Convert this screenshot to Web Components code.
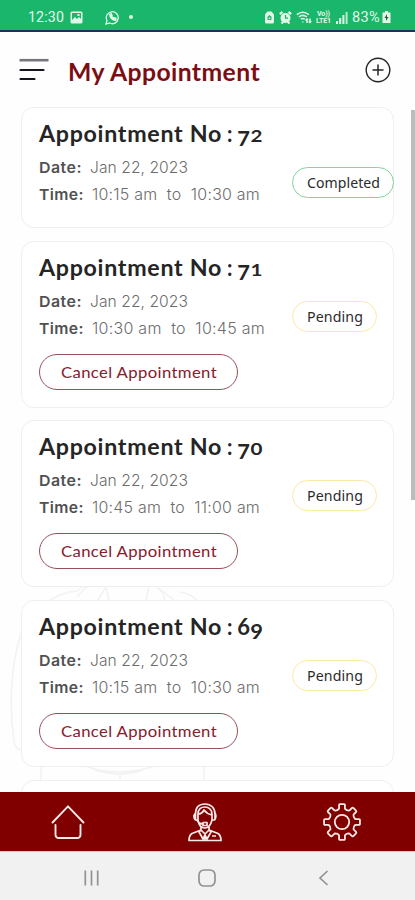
<!DOCTYPE html>
<html lang="en">
<head>
<meta charset="utf-8">
<title>My Appointment</title>
<style>
html, body {
  margin: 0;
  height: 100%;
  overflow: hidden;
}
body {
  --maroon: #800000;
  --green: #19b66b;
  --font-title: Lato, "Open Sans", sans-serif;
  --font-body: Inter, "Noto Sans", sans-serif;
  font-family: var(--font-body);
  background: #fefefe;
}
</style>
</head>
<body>
<appointment-app></appointment-app>

<template id="fit-text">
<style>
:host { display: inline-block; }
span {
  display: inline-block;
  white-space: pre;
  transform-origin: 0 50%;
}
</style>
<span><slot></slot></span>
</template>

<template id="status-bar">
<style>
:host {
  display: flex;
  align-items: center;
  height: 30px;
  padding: 4px 24px 0 28px;
  box-sizing: border-box;
  background: var(--green);
  box-shadow: 0 2px #17345f;
  color: #e2f8e7;
  font: 14px/26px Roboto, sans-serif;
}
svg { display: block; flex: none; }
.left, .right { display: flex; align-items: center; }
.right { margin-left: auto; gap: 4px; }
.photo { margin-left: 6px; }
.chat { margin-left: 22px; }
.battery { margin-left: -2px; }
.dot {
  width: 4px;
  height: 4px;
  border-radius: 50%;
  background: currentColor;
  margin-left: 9px;
}
</style>
<div class="left">
  <fit-text width="36">12:30</fit-text>
  <svg class="photo" width="13" height="13" viewBox="0 0 13 13"><path fill="currentColor" fill-rule="evenodd" d="M2 .5h9Q12.5.5 12.5 2v9q0 1.500-1.500 1.500H2Q.5 12.500.5 11V2Q.5.5 2 .5zM2 2v7l3-3 2 2 2-2 2 2V2zM7.500 3h2v2h-2z"/></svg>
  <svg class="chat" width="15" height="15" viewBox="0 0 15 15" fill="none" stroke="currentColor" stroke-width="1.300"><path d="M1 14l1-3.500a6 6 0 1 1 2.500 2.500z"/><path stroke-width="1.800" d="M5 4.500c0 3 2.500 5.500 5.500 5.500l.3-1.500-1.800-.8-.8.8L6.300 6.600l.6-.8L6.200 4z"/></svg>
  <span class="dot"></span>
</div>
<div class="right">
  <svg width="11" height="13" viewBox="0 0 11 13"><path fill="currentColor" fill-rule="evenodd" d="M3.500.5h4L10 3.500V11q0 1.500-1.500 1.500h-6Q1 12.500 1 11V3.500zM5.500 4L2.800 6.500h.8V9h3.800V6.500h.8zM4.700 6.500h1.600V8H4.700z"/></svg>
  <svg width="13" height="13" viewBox="0 0 13 13"><circle cx="6.500" cy="7" r="5" fill="currentColor"/><path stroke="currentColor" stroke-width="2.200" d="M.8 3.200L3.500.9M12.200 3.200L9.500.9M2.500 12.500l2-2M10.500 12.500l-2-2"/><path d="M6.500 4v3.200H9" fill="none" stroke="#19b66b" stroke-width="1.200"/></svg>
  <svg width="16" height="13" viewBox="0 0 16 13" fill="none" stroke="currentColor" stroke-width="1.500"><path d="M.8 3.700q6-5 12 0M2.800 6q4-3.300 8 0M4.800 8.200q2-1.500 4 0M6.800 10.500v1M11 12V8m-1.500 1.500L11 8l1 1M14 7.500v4m-1.300-1.300L14 11.500l1.300-1.300"/></svg>
  <svg width="16" height="14" viewBox="0 0 16 14" fill="currentColor" font-family="Roboto, sans-serif" font-size="7" font-weight="700"><text x="1" y="6" textLength="13">Vo))</text><text x="0" y="13" textLength="15">LTE1</text></svg>
  <svg width="12" height="13" viewBox="0 0 12 13" fill="currentColor"><path d="M0 10h2v3H0zM3.200 7h2v6h-2zM6.400 4h2v9h-2z"/><path opacity=".8" d="M9.600 1h2v12h-2z"/></svg>
  <fit-text width="28">83%</fit-text>
  <svg class="battery" width="9" height="12" viewBox="0 0 9 12"><path fill="currentColor" d="M3 0h3v1.500h2.500V12H.5V1.500H3z"/><path fill="#176a48" d="M5 3L2.500 7H4v3l2.600-4H5z"/></svg>
</div>
</template>

<template id="page-header">
<style>
:host {
  display: flex;
  align-items: center;
  height: 77px;
  padding: 3px 24px 0 19px;
  box-sizing: border-box;
}
h1 {
  margin: 3px 0 0 19px;
  color: #7b0d13;
  font: 700 24px/32px var(--font-title);
}
.add { margin-left: auto; }
svg { display: block; flex: none; }
</style>
<svg width="30" height="24" viewBox="0 0 30 24"><path stroke="#77767b" stroke-width="2.600" d="M.5 2.200h29"/><path stroke="#15151b" stroke-width="2.200" stroke-linecap="round" d="M1.500 12h23M1.500 21h14"/></svg>
<h1><fit-text width="192"><slot></slot></fit-text></h1>
<svg class="add" width="26" height="26" viewBox="0 0 26 26" fill="none" stroke="#242424" stroke-width="1.400"><circle cx="13" cy="13" r="11.800"/><path stroke-width="1.500" d="M13 7.500v11M7.500 13h11"/></svg>
</template>

<template id="old-number">
<style>
:host { display: inline-flex; align-items: baseline; }
span { display: inline-block; width: 13.200px; text-align: center; }
.small { font-size: .78em; transform: scaleX(1.200); }
.drop { font-size: .92em; transform: translateY(4px) scaleX(1.080); }
</style>
</template>

<template id="status-pill">
<style>
:host {
  display: block;
  box-sizing: border-box;
  height: 31px;
  padding: 0 13.500px;
  border: 1px solid #fbe9a6;
  border-radius: 16px;
  color: #2b2b2b;
  background: #fff;
  font: 14px/30px "Noto Sans", sans-serif;
}
:host([kind="completed"]) { border-color: #7ed6a0; }
</style>
<slot></slot>
</template>

<template id="cancel-button">
<style>
:host { display: block; }
button {
  display: block;
  width: 199px;
  height: 36px;
  padding: 0 0 1px 21px;
  border: 1px solid #965059;
  border-radius: 18px;
  background: #fff;
  color: #86202c;
  font: 400 16px/33px var(--font-title);
  text-align: left;
}
</style>
<button><fit-text width="156">Cancel Appointment</fit-text></button>
</template>

<template id="appointment-card">
<style>
:host {
  display: block;
  box-sizing: border-box;
  width: 373px;
  height: 167px;
  flex: none;
  padding: 10px 0 0 17px;
  border: 1px solid #efefef;
  border-radius: 13px;
  background: #fff;
}
:host([state="completed"]) { height: 121px; }
h2 {
  display: flex;
  align-items: baseline;
  height: 32px;
  margin: 0;
  color: #252525;
  font: 700 22px/32px var(--font-title);
}
.details { display: flex; height: 55px; margin-top: 4px; }
dl { margin: 0; width: 253px; flex: none; }
.row { display: flex; height: 27px; align-items: center; }
dt { color: #515151; font: 600 15px/27px var(--font-body); }
dd { margin: 0 0 0 8px; color: #6d6d6d; font: 300 15.500px/27px var(--font-body); }
status-pill { align-self: flex-start; margin-top: 13px; flex: none; }
cancel-button { margin-top: 11px; }
</style>
<h2></h2>
<div class="details">
  <dl>
    <div class="row"><dt><fit-text width="43">Date:</fit-text></dt><dd class="date"></dd></div>
    <div class="row"><dt><fit-text width="45">Time:</fit-text></dt><dd class="time"></dd></div>
  </dl>
  <status-pill></status-pill>
</div>
</template>

<template id="bottom-nav">
<style>
:host {
  display: grid;
  grid-template-columns: repeat(3, 1fr);
  align-items: center;
  justify-items: center;
  height: 60px;
  padding: 0 5px 0 0;
  background: var(--maroon);
  border-bottom: 1px solid #d5c9c9;
  box-sizing: border-box;
}
svg { display: block; fill: none; stroke: #f9eaea; }
</style>
<svg width="34" height="36" viewBox="0 0 34 36" stroke-width="1.900" stroke-linecap="round" stroke-linejoin="round"><path d="M1.500 18.500L17 2.300l15.500 16.200M4.500 21v9.500q0 3.500 3.500 3.500h18q3.500 0 3.500-3.500V21"/></svg>
<svg width="36" height="40" viewBox="0 0 36 40" stroke-width="1.700" stroke-linejoin="round"><path d="M8.500 18V12C8.500 5 12 2 18 2s10 4 10 10v6M11 18v-6c0-5 3-7 7-7s7 3 7 7v6M11 12q4 0 6-4 3 4 8 5M8.500 11q-3 3.500 0 7H11M28 11q2 3.500-.5 7H25M11 18q1 8 7 8 5 0 7-8M10 18q2 4 6 4M16 20.500h4v3h-4zM14 25v3l-9 3.500q-3 2-3 7h32q0-5-3-7L22 28v-3M14 28l4 4 4-4M14 28l-2 2 4 7 2-4 2 4 4-7-2-2M18 33v5M25 34h4"/></svg>
<svg width="38" height="38" viewBox="-19 -19 38 38" stroke-width="1.800" stroke-linejoin="round"><circle r="7.200"/><path class="gear"/></svg>
</template>

<template id="system-nav">
<style>
:host {
  display: flex;
  height: 48px;
  align-items: center;
  padding: 4px 0 0 83px;
  background: #f1f1f1;
  box-sizing: border-box;
}
svg { display: block; fill: none; stroke: #929292; stroke-width: 1.700; }
svg + svg { margin-left: 98px; }
svg:last-child { margin-left: 102px; }
</style>
<svg width="17" height="18" viewBox="0 0 17 18"><path d="M2.300 1.500v15M8.500 1.500v15M14.700 1.500v15"/></svg>
<svg width="18" height="18" viewBox="0 0 18 18"><rect x="1" y="1" width="16" height="16" rx="5"/></svg>
<svg width="11" height="18" viewBox="0 0 11 18"><path d="M9.500 2L2 9l7.500 7"/></svg>
</template>

<template id="appointment-app">
<style>
:host {
  display: flex;
  flex-direction: column;
  width: 415px;
  height: 900px;
  overflow: hidden;
}
status-bar, page-header, bottom-nav, system-nav { flex: none; }
main {
  display: flex;
  height: 685px;
  overflow: hidden;
  position: relative;
}
.list {
  display: flex;
  flex-direction: column;
  gap: 12.700px;
  width: 411px;
  padding-left: 21px;
  box-sizing: border-box;
  position: relative;
}
.edge {
  width: 371px;
  height: 40px;
  flex: none;
  border: 1px solid #efefef;
  border-radius: 13px;
  background: #fff;
}
.thumb { width: 4px; height: 390px; margin-top: 3px; background: #bcbcbc; }
.backdrop { position: absolute; left: 0; top: 463px; fill: none; stroke: #f2f2f2; stroke-width: 1.500; }
</style>
<status-bar></status-bar>
<page-header>My Appointment</page-header>
<main>
  <svg class="backdrop" width="240" height="222" viewBox="0 570 240 222"><path d="M47 602q15-10 30-11l10-7M77 597l8-9 7-3M98 600l8-13 3 14M146 600l3-14M165 601q-1-9-8-14l17 13M180 592q13 2 18 10M25 622Q5 675 14 742q2 8 8 8M22 670v72M41 765v15M204 765v15M85 766q32 12 70 0M95 770q25 8 48 0M120 775v5"/></svg>
  <div class="list"></div>
  <div class="thumb"></div>
</main>
<bottom-nav></bottom-nav>
<system-nav></system-nav>
</template>

<script>
class BaseElement extends HTMLElement {
  constructor() {
    super();
    const template = document.getElementById(this.localName);
    this.attachShadow({ mode: 'open' });
    this.shadowRoot.appendChild(template.content.cloneNode(true));
  }
}

// Spreads its text over the given width, half by stretching and half by tracking
class FitText extends BaseElement {
  connectedCallback() {
    const width = Number(this.getAttribute('width'));
    const span = this.shadowRoot.querySelector('span');
    const slotted = span.querySelector('slot').assignedNodes({ flatten: true });
    const count = slotted.map(node => node.textContent).join('').length;
    const natural = span.getBoundingClientRect().width;
    if (natural && count) {
      const scale = Math.sqrt(width / natural);
      span.style.letterSpacing = (width / scale - natural) / count + 'px';
      span.style.transform = 'scaleX(' + scale + ')';
    }
    this.style.width = width + 'px';
  }
}

// Old-style figures: 0-2 at x-height, 3-5, 7 and 9 below the baseline
class OldNumber extends BaseElement {
  connectedCallback() {
    for (const digit of this.getAttribute('value')) {
      const span = document.createElement('span');
      span.textContent = digit;
      if ('012'.includes(digit)) span.className = 'small';
      if ('34579'.includes(digit)) span.className = 'drop';
      this.shadowRoot.appendChild(span);
    }
  }
}

class AppointmentCard extends BaseElement {
  connectedCallback() {
    const root = this.shadowRoot;
    const state = this.getAttribute('state');
    root.querySelector('h2').innerHTML = '<fit-text width="183">Appointment No</fit-text><fit-text width="15"> : </fit-text><old-number value="' + this.getAttribute('number') + '"></old-number>';
    root.querySelector('.date').innerHTML = '<fit-text width="98">' + this.getAttribute('date') + '</fit-text>';
    root.querySelector('.time').innerHTML = '<fit-text width="' + this.getAttribute('time-width') + '">' + this.getAttribute('from') + '  to  ' + this.getAttribute('to') + '</fit-text>';
    const pill = root.querySelector('status-pill');
    pill.setAttribute('kind', state);
    pill.innerHTML = state === 'completed' ? '<fit-text width="73">Completed</fit-text>' : '<fit-text width="56">Pending</fit-text>';
    if (state === 'pending') {
      root.appendChild(document.createElement('cancel-button'));
    }
  }
}

class BottomNav extends BaseElement {
  connectedCallback() {
    // Eight rounded teeth around the hub
    const at = (r, deg) => {
      const a = deg * Math.PI / 180;
      return (r * Math.cos(a)).toFixed(2) + ' ' + (r * Math.sin(a)).toFixed(2);
    };
    let d = '';
    for (let i = 0; i < 8; i++) {
      const a = i * 45;
      d += (i ? 'L' : 'M') + at(13.5, a - 13) + 'Q' + at(14.5, a - 11) + ' ' + at(17, a - 10);
      d += 'Q' + at(18.3, a - 9) + ' ' + at(18, a - 5) + 'L' + at(18, a + 5);
      d += 'Q' + at(18.3, a + 9) + ' ' + at(17, a + 10) + 'Q' + at(14.5, a + 11) + ' ' + at(13.5, a + 13);
      d += 'Q' + at(12.2, a + 22.5) + ' ' + at(13.5, a + 32);
    }
    this.shadowRoot.querySelector('.gear').setAttribute('d', d + 'z');
  }
}

const appointments = [
  ['72', '10:15 am', '10:30 am', 'completed', 168],
  ['71', '10:30 am', '10:45 am', 'pending', 173],
  ['70', '10:45 am', '11:00 am', 'pending', 168],
  ['69', '10:15 am', '10:30 am', 'pending', 168]
];

class AppointmentApp extends BaseElement {
  connectedCallback() {
    const list = this.shadowRoot.querySelector('.list');
    list.innerHTML = appointments.map(([number, from, to, state, width]) =>
      `<appointment-card number="${number}" date="Jan 22, 2023" from="${from}" to="${to}" state="${state}" time-width="${width}"></appointment-card>`
    ).join('') + '<div class="edge"></div>';
  }
}

customElements.define('fit-text', FitText);
customElements.define('old-number', OldNumber);
customElements.define('status-bar', class extends BaseElement {});
customElements.define('page-header', class extends BaseElement {});
customElements.define('status-pill', class extends BaseElement {});
customElements.define('cancel-button', class extends BaseElement {});
customElements.define('appointment-card', AppointmentCard);
customElements.define('bottom-nav', BottomNav);
customElements.define('system-nav', class extends BaseElement {});
customElements.define('appointment-app', AppointmentApp);
</script>
</body>
</html>
